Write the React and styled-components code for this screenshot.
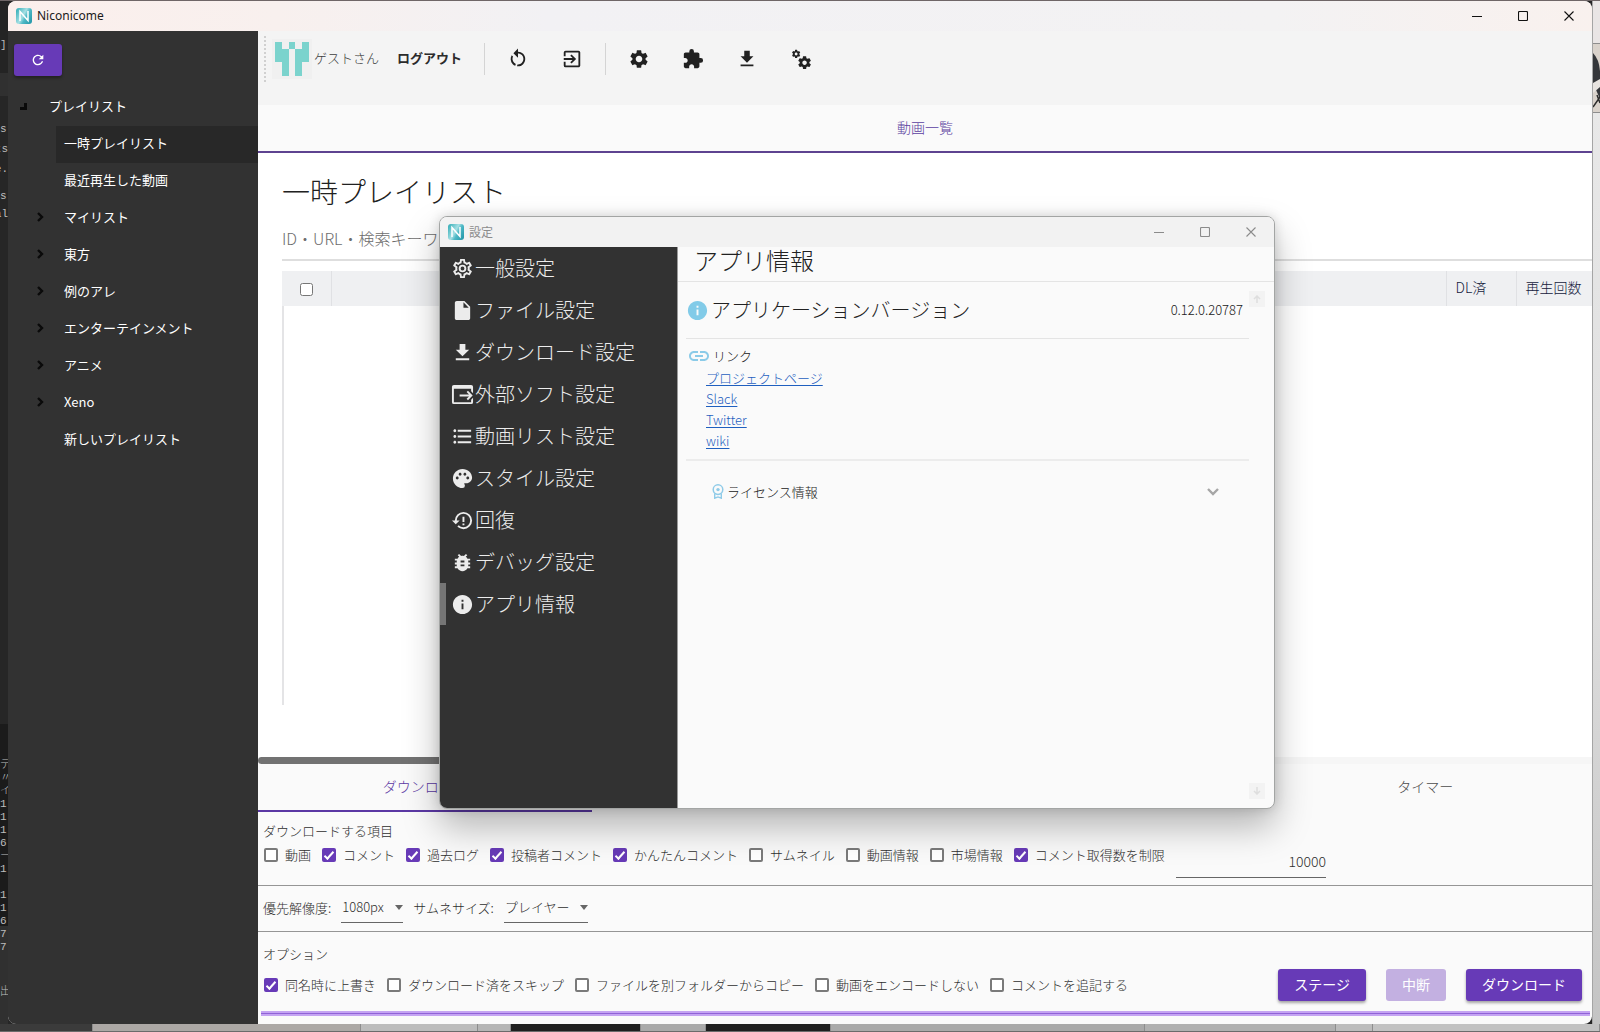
import React, { useState } from "react";
import styled, { createGlobalStyle } from "styled-components";
import {
  MdBugReport,
  MdExitToApp,
  MdExtension,
  MdFormatListBulleted,
  MdInfo,
  MdInsertDriveFile,
  MdLink,
  MdPalette,
  MdRefresh,
  MdSettings,
} from "react-icons/md";

const purple = "#673ab7";
const jp = `"Noto Sans CJK JP", "Noto Sans", sans-serif`;

const Global = createGlobalStyle`
  *, *::before, *::after { box-sizing: border-box; }
  body { margin: 0; background: #2a2a2a; font-family: ${jp}; font-weight: 300; font-size: 13px; line-height: 20px; color: #212121; }
  button, input, select { font: inherit; color: inherit; margin: 0; }
  button { border: 0; padding: 0; background: none; cursor: pointer; }
  svg { display: block; flex: none; }
  ul { list-style: none; margin: 0; padding: 0; }
  h1, h2, h3, p { margin: 0; font-weight: 300; }
`;

/* ---------- desktop ---------- */

const Desktop = styled.div`
  position: relative;
  min-height: 100vh;
  display: grid;
  grid-template-columns: 8px minmax(0, 1fr) 8px;
  grid-template-rows: minmax(0, 1fr) 8px;
  padding-top: 1px;
  background: linear-gradient(#6f6667, #6f6667) top / 100% 1px no-repeat, #262626;
`;

const EditorStrip = styled.div`
  display: flex;
  flex-direction: column;
  overflow: hidden;
  width: 8px;
  background: linear-gradient(#242424 0 72px, #303030 72px 95px, #262626 95px 723px, #1b1b1b 723px 925px, #303030 925px);
  color: #bdbdbd;
  font-family: "Liberation Mono", ${jp};
  font-size: 11px;
  white-space: nowrap;
`;

const EditorLines = styled.div`
  display: flex;
  flex-direction: column;
  align-items: ${(p) => (p.$end ? "flex-end" : "flex-start")};
  padding-top: ${(p) => p.$top}px;
  line-height: ${(p) => p.$line}px;
`;

const EditorLine = styled.span`
  height: ${(p) => p.$line}px;
`;

const PictureStrip = styled.div`
  display: flex;
  flex-direction: column;
  padding-top: 42px;
  background: linear-gradient(#e9e5e5 0 42px, #e8e8e8 112px, #dcdcdc 60%, #c4c4c4);
  border-left: 1px solid #a5a5a5;
`;

const TaskStrip = styled.div`
  grid-column: 1 / -1;
  display: grid;
  grid-template-columns: 93fr 268fr 117fr 33fr 130fr 65fr 125fr 314fr 191fr 37fr 227fr;
  border-bottom: 1px solid #6b6b6b;
`;

const TaskPiece = styled.span`
  background: ${(p) => p.$tone};
  border-right: 1px solid #8d8d8d;
`;

/* ---------- window frame ---------- */

const AppWindow = styled.div`
  display: flex;
  flex-direction: column;
  min-width: 0;
  overflow: hidden;
  border-radius: 8px;
  background: #fafafa;
`;

const TitleBar = styled.header`
  display: flex;
  align-items: center;
  height: 30px;
  flex: none;
  padding-left: 8px;
  gap: 5px;
  font-family: ${(p) => (p.$muted ? jp : `"Noto Sans", sans-serif`)};
  font-size: 12px;
  font-weight: 400;
  color: ${(p) => (p.$muted ? "#8b8b8b" : "#1a1a1a")};
  background: ${(p) =>
    p.$muted ? "#f2f2f2" : "linear-gradient(90deg, #fbefec 0%, #f8f0ee 17%, #f2f1f4 34%, #f3f2f3 80%, #f9f1ee 100%)"};
`;

const TitleText = styled.span`
  flex: 1;
`;

const LogoTile = styled.span`
  width: 16px;
  height: 16px;
  flex: none;
  border-radius: 3px;
  background: linear-gradient(120deg, #2aa9b3, #a6e0e4 45%, #4fb9c6 60%, #1d93a6);
`;

const WindowButtons = styled.div`
  display: flex;
`;

const WindowButton = styled.button`
  width: 46px;
  height: 30px;
  display: grid;
  place-items: center;
`;

const Body = styled.div`
  flex: 1;
  display: flex;
  min-height: 0;
`;

/* ---------- playlist sidebar ---------- */

const Sidebar = styled.nav`
  width: 250px;
  flex: none;
  padding: 13px 0 0 6px;
  background: #323232;
  color: #fff;
  font-weight: 400;
`;

const ReloadButton = styled.button`
  display: grid;
  place-items: center;
  width: 48px;
  height: 32px;
  border-radius: 3px;
  background: ${purple};
  color: #fff;
  box-shadow: 0 2px 3px rgba(0, 0, 0, 0.35);
`;

const Tree = styled.ul`
  padding-top: 13px;
`;

const TreeRow = styled.li`
  display: flex;
  align-items: center;
  height: 37px;
  margin-left: ${(p) => (p.$root ? 0 : 42)}px;
  padding: 0 0 3px ${(p) => (p.$root ? 6 : 8)}px;
  color: #fff;
  background: ${(p) => (p.$selected ? "#282828" : "transparent")};
`;

const RootArrow = styled.span`
  width: 29px;
`;

const ChildArrow = styled.span`
  width: 0;
  display: flex;
  justify-content: flex-end;
  svg { margin-right: 20px; }
`;

/* ---------- main area ---------- */

const Main = styled.main`
  flex: 1;
  min-width: 0;
  display: flex;
  flex-direction: column;
`;

const Toolbar = styled.div`
  display: flex;
  align-items: flex-start;
  height: 74px;
  flex: none;
  padding: 5px 0 0 6px;
  background: #f4f4f4;
`;

const Grip = styled.span`
  width: 2px;
  height: 46px;
  margin-right: 6px;
  background: repeating-linear-gradient(#d0d0d0 0 2px, transparent 2px 4px);
`;

const ToolbarItems = styled.div`
  display: flex;
  align-items: center;
  height: 46px;
`;

const Avatar = styled.span`
  display: grid;
  place-items: center;
  width: 40px;
  height: 40px;
  background: #f0f0f0;
`;

const UserName = styled.span`
  padding: 0 0 2px 2px;
  color: #3d3d3d;
`;

const LogoutButton = styled.button`
  padding: 0 0 2px 18px;
  font-weight: 700;
  color: #2b2b2b;
`;

const Separator = styled.span`
  width: 1px;
  height: 32px;
  margin: 0 6px 0 ${(p) => p.$before}px;
  background: #d4d4d4;
`;

const IconButton = styled.button`
  width: 54px;
  height: 46px;
  display: grid;
  place-items: center;
  color: #212121;
`;

const ViewTab = styled.button`
  display: block;
  width: 100%;
  height: 48px;
  flex: none;
  padding-bottom: 2px;
  background: #fafafa;
  border-bottom: 2px solid #5e4390;
  color: #5b3fa0;
  font-size: 14px;
`;

const VideoPane = styled.section`
  flex: 1;
  display: flex;
  flex-direction: column;
  padding: 18px 0 0 24px;
  background: #fff;
`;

const PlaylistTitle = styled.h1`
  font-size: 28px;
  line-height: 40px;
`;

const SearchBox = styled.input`
  height: 38px;
  margin: 12px 0 10px;
  padding: 0 0 6px;
  border: 0;
  border-bottom: 2px solid #dedede;
  background: none;
  font-size: 16px;
  outline: 0;
  &::placeholder { color: #6d6d6d; opacity: 1; }
`;

const VideoTable = styled.table`
  width: 100%;
  border-collapse: collapse;
  table-layout: fixed;
  font-size: 14px;
  color: #14213d;
`;

const HeadCell = styled.th`
  width: ${(p) => (p.$width ? `${p.$width}px` : "auto")};
  height: 35px;
  padding: ${(p) => (p.$center ? "0 0 2px" : "0 0 4px 9px")};
  background: #eff0f2;
  border-right: 1px solid #e0e1e4;
  font-weight: 300;
  text-align: ${(p) => (p.$center ? "center" : "left")};
  white-space: nowrap;
  &:last-child { border-right: 0; }
  input { display: inline-block; vertical-align: middle; }
`;

const RowsArea = styled.div`
  flex: 1;
  margin-bottom: 52px;
  border-left: 2px solid #e4e4e6;
`;

const Splitter = styled.div`
  height: 7px;
  flex: none;
  display: flex;
  background: #f6f6f6;
`;

const SplitterThumb = styled.span`
  width: 50%;
  border-radius: 4px;
  background: #727272;
`;

/* ---------- download panel ---------- */

const TabStrip = styled.div`
  display: grid;
  grid-template-columns: repeat(4, 1fr);
  height: 48px;
  flex: none;
`;

const PanelTab = styled.button`
  grid-column: ${(p) => p.$column};
  padding-bottom: 2px;
  border-bottom: 2px solid ${(p) => (p.$active ? "#5b38a4" : "transparent")};
  color: ${(p) => (p.$active ? "#5b38a4" : "#4c4c4c")};
  font-size: 14px;
`;

const Panel = styled.section`
  flex: none;
  padding: ${(p) => p.$pad};
  border-bottom: ${(p) => (p.$last ? "0" : "1px solid #959595")};
  color: #2e2e2e;
`;

const CheckRow = styled.div`
  display: flex;
  align-items: ${(p) => (p.$top ? "flex-start" : "center")};
  height: ${(p) => p.$height}px;
  padding-left: 1px;
  gap: 11px;
`;

const CheckLabel = styled.label`
  display: flex;
  align-items: center;
  height: 28px;
  gap: 7px;
  white-space: nowrap;
`;

const Box = styled.input`
  appearance: none;
  display: grid;
  place-items: center;
  width: 14px;
  height: 14px;
  flex: none;
  border: 2px solid #7a7a7a;
  border-radius: 2px;
  background: #fff;
  &:checked { border-color: ${purple}; background: ${purple}; }
  &:checked::after {
    content: "";
    width: 10px;
    height: 5px;
    border-left: 2px solid #fff;
    border-bottom: 2px solid #fff;
    transform: translateY(-1px) rotate(-48deg);
  }
`;

const CountInput = styled.input`
  width: 150px;
  height: 33px;
  align-self: flex-end;
  padding: 0;
  border: 0;
  border-bottom: 1px solid #666;
  background: none;
  text-align: right;
  font-size: 14px;
`;

const SelectRow = styled.div`
  display: flex;
  align-items: center;
  gap: 10px;
`;

const SelectLabel = styled.label`
  display: flex;
  align-items: center;
  gap: 10px;
`;

const SelectShell = styled.span`
  display: grid;
  align-items: center;
  border-bottom: 1px solid #666;
  &::after {
    content: "";
    grid-area: 1 / 1;
    justify-self: end;
    border: 4px solid transparent;
    border-top: 5px solid #666;
    border-bottom: 0;
    pointer-events: none;
  }
`;

const Select = styled.select`
  grid-area: 1 / 1;
  appearance: none;
  width: ${(p) => p.$width}px;
  height: 29px;
  padding: 0 0 2px 1px;
  border: 0;
  background: none;
  font-size: 13px;
`;

const OptionsBar = styled.div`
  display: flex;
  align-items: center;
  justify-content: space-between;
  padding-right: 10px;
`;

const Actions = styled.div`
  display: flex;
  gap: 20px;
`;

const ActionButton = styled.button`
  height: 32px;
  padding: 0 16px 2px;
  border-radius: 3px;
  background: ${purple};
  color: #fff;
  font-size: 14px;
  font-weight: 400;
  box-shadow: 0 2px 3px rgba(0, 0, 0, 0.35);
  &:disabled { background: #c3b0e1; box-shadow: none; cursor: default; }
`;

const ProgressLine = styled.div`
  height: 5px;
  flex: none;
  margin: 0 2px 8px 3px;
  background: linear-gradient(#c4a3f2 0 2px, #8f62d6 2px 3px, #c4a3f2 3px);
`;

/* ---------- settings window ---------- */

const Dialog = styled.div`
  position: absolute;
  left: 439px;
  top: 216px;
  width: 836px;
  height: 593px;
  display: flex;
  flex-direction: column;
  overflow: hidden;
  border: 1px solid #a3a5a4;
  border-radius: 8px;
  background: #fafafa;
  box-shadow: 0 18px 36px rgba(0, 0, 0, 0.28), 0 0 12px rgba(0, 0, 0, 0.14);
`;

const SettingsNav = styled.nav`
  width: 238px;
  flex: none;
  background: #323232;
  border-right: 1px solid #9a9a9a;
`;

const NavButton = styled.button`
  display: flex;
  align-items: center;
  gap: 1px;
  width: 100%;
  height: 42px;
  padding-left: 5px;
  border-left: 6px solid ${(p) => (p.$active ? "#757575" : "transparent")};
  color: #ececec;
  font-size: 20px;
`;

const SettingsPage = styled.section`
  flex: 1;
  min-width: 0;
  display: flex;
  flex-direction: column;
`;

const PageTitle = styled.h2`
  height: 35px;
  padding-left: 16px;
  border-bottom: 1px solid #e4e4e4;
  font-size: 24px;
  line-height: 26px;
`;

const PageBody = styled.div`
  flex: 1;
  display: flex;
  padding: 0 9px 0 8px;
`;

const PageContent = styled.div`
  flex: 1;
`;

const VersionRow = styled.div`
  display: flex;
  align-items: center;
  height: 57px;
  padding-right: 6px;
  gap: 2px;
  border-bottom: 1px solid #e4e4e4;
`;

const VersionTitle = styled.h3`
  flex: 1;
  font-size: 20px;
`;

const VersionText = styled.span`
  font-size: 13px;
`;

const LinkBlock = styled.div`
  height: 122px;
  padding: 6px 0 0 1px;
  border-bottom: 2px solid #ececec;
`;

const LinkHeading = styled.h3`
  display: flex;
  align-items: center;
  gap: 2px;
  height: 22px;
  font-size: 13px;
`;

const LinkList = styled.ul`
  padding-left: 19px;
  line-height: 21px;
`;

const ExternalLink = styled.a`
  color: #1f5fbf;
  text-underline-offset: 2px;
`;

const LicenseButton = styled.button`
  display: flex;
  align-items: center;
  width: 100%;
  height: 61px;
  padding: 0 29px 0 26px;
  gap: 3px;
`;

const LicenseText = styled.span`
  flex: 1;
  text-align: left;
`;

const ScrollColumn = styled.div`
  display: flex;
  flex-direction: column;
  justify-content: space-between;
  padding: 9px 0;
`;

const ScrollButton = styled.button`
  width: 16px;
  height: 16px;
  display: grid;
  place-items: center;
  background: #f3f3f3;
`;

/* ---------- icons ---------- */

const Glyph = ({ d, size = 22, color = "currentColor" }) => (
  <svg width={size} height={size} viewBox="0 0 24 24" fill={color} aria-hidden="true">
    <path d={d} />
  </svg>
);

const paths = {
  restart:
    "M12,4C14.1,4 16.1,4.8 17.6,6.3C20.7,9.4 20.7,14.5 17.6,17.6C15.8,19.5 13.3,20.2 10.9,19.9L11.4,17.9C13.1,18.1 14.9,17.5 16.2,16.2C18.5,13.9 18.5,10.1 16.2,7.7C15.1,6.6 13.5,6 12,6V10.6L7,5.6L12,0.6V4M6.3,17.6C3.7,15 3.3,11 5.1,7.9L6.6,9.4C5.5,11.6 5.9,14.4 7.8,16.2C8.3,16.7 8.9,17.1 9.6,17.4L9,19.4C8,19 7.1,18.4 6.3,17.6Z",
  download: "M5,20H19V18H5M19,9H15V3H9V9H5L12,16L19,9Z",
  cogs: "M15.9,18.45C17.25,18.45 18.35,17.35 18.35,16C18.35,14.65 17.25,13.55 15.9,13.55C14.54,13.55 13.45,14.65 13.45,16C13.45,17.35 14.54,18.45 15.9,18.45M21.1,16.68L22.58,17.84C22.71,17.95 22.75,18.13 22.66,18.29L21.26,20.71C21.17,20.86 21,20.92 20.83,20.86L19.09,20.16C18.73,20.44 18.33,20.67 17.91,20.85L17.64,22.7C17.62,22.87 17.47,23 17.3,23H14.5C14.32,23 14.18,22.87 14.15,22.7L13.89,20.85C13.46,20.67 13.07,20.44 12.71,20.16L10.96,20.86C10.81,20.92 10.62,20.86 10.54,20.71L9.14,18.29C9.05,18.13 9.09,17.95 9.22,17.84L10.7,16.68L10.65,16L10.7,15.31L9.22,14.16C9.09,14.05 9.05,13.86 9.14,13.71L10.54,11.29C10.62,11.13 10.81,11.07 10.96,11.13L12.71,11.84C13.07,11.56 13.46,11.32 13.89,11.15L14.15,9.29C14.18,9.13 14.32,9 14.5,9H17.3C17.47,9 17.62,9.13 17.64,9.29L17.91,11.15C18.33,11.32 18.73,11.56 19.09,11.84L20.83,11.13C21,11.07 21.17,11.13 21.26,11.29L22.66,13.71C22.75,13.86 22.71,14.05 22.58,14.16L21.1,15.31L21.15,16L21.1,16.68M6.69,8.07C7.56,8.07 8.26,7.37 8.26,6.5C8.26,5.63 7.56,4.92 6.69,4.92C5.82,4.92 5.12,5.63 5.12,6.5C5.12,7.37 5.82,8.07 6.69,8.07M10.03,6.94L11,7.68C11.07,7.75 11.09,7.87 11.03,7.97L10.13,9.53C10.08,9.63 9.96,9.67 9.86,9.63L8.74,9.18L8,9.62L7.81,10.81C7.79,10.92 7.7,11 7.59,11H5.79C5.67,11 5.58,10.92 5.56,10.81L5.4,9.62L4.64,9.18L3.5,9.63C3.41,9.67 3.3,9.63 3.24,9.53L2.34,7.97C2.28,7.87 2.31,7.75 2.39,7.68L3.34,6.94L3.31,6.5L3.34,6.06L2.39,5.32C2.31,5.25 2.28,5.13 2.34,5.03L3.24,3.47C3.3,3.37 3.41,3.33 3.5,3.38L4.63,3.82L5.4,3.38L5.56,2.19C5.58,2.08 5.67,2 5.79,2H7.59C7.7,2 7.79,2.08 7.81,2.19L8,3.38L8.74,3.82L9.86,3.38C9.96,3.33 10.08,3.37 10.13,3.47L11.03,5.03C11.09,5.13 11.07,5.25 11,5.32L10.03,6.06L10.06,6.5L10.03,6.94Z",
  cogOutline:
    "M12,8A4,4 0 0,1 16,12A4,4 0 0,1 12,16A4,4 0 0,1 8,12A4,4 0 0,1 12,8M12,10A2,2 0 0,0 10,12A2,2 0 0,0 12,14A2,2 0 0,0 14,12A2,2 0 0,0 12,10M10,22C9.75,22 9.54,21.82 9.5,21.58L9.13,18.93C8.5,18.68 7.96,18.34 7.44,17.94L4.95,18.95C4.73,19.03 4.46,18.95 4.34,18.73L2.34,15.27C2.21,15.05 2.27,14.78 2.46,14.63L4.57,12.97L4.5,12L4.57,11L2.46,9.37C2.27,9.22 2.21,8.95 2.34,8.73L4.34,5.27C4.46,5.05 4.73,4.96 4.95,5.05L7.44,6.05C7.96,5.66 8.5,5.32 9.13,5.07L9.5,2.42C9.54,2.18 9.75,2 10,2H14C14.25,2 14.46,2.18 14.5,2.42L14.87,5.07C15.5,5.32 16.04,5.66 16.56,6.05L19.05,5.05C19.27,4.96 19.54,5.05 19.66,5.27L21.66,8.73C21.79,8.95 21.73,9.22 21.54,9.37L19.43,11L19.5,12L19.43,13L21.54,14.63C21.73,14.78 21.79,15.05 21.66,15.27L19.66,18.73C19.54,18.95 19.27,19.04 19.05,18.95L16.56,17.95C16.04,18.34 15.5,18.68 14.87,18.93L14.5,21.58C14.46,21.82 14.25,22 14,22H10M11.25,4L10.88,6.61C9.68,6.86 8.62,7.5 7.85,8.39L5.44,7.35L4.69,8.65L6.8,10.2C6.4,11.37 6.4,12.64 6.8,13.8L4.68,15.36L5.43,16.66L7.86,15.62C8.63,16.5 9.68,17.14 10.87,17.38L11.24,20H12.76L13.13,17.39C14.32,17.14 15.37,16.5 16.14,15.62L18.57,16.66L19.32,15.36L17.2,13.81C17.6,12.64 17.6,11.37 17.2,10.2L19.31,8.65L18.56,7.35L16.15,8.39C15.38,7.5 14.32,6.86 13.12,6.62L12.75,4H11.25Z",
  appExport:
    "M9,12H18.8L16.3,9.5L17.7,8.1L22.6,13L17.7,17.9L16.3,16.5L18.8,14H9V12M21,17.4V20H3V6H21V8.6L23,10.6V4A2,2 0 0,0 21,2H3A2,2 0 0,0 1,4V20A2,2 0 0,0 3,22H21A2,2 0 0,0 23,20V15.4L21,17.4Z",
  restoreAlert:
    "M12,8H14V13.5H12V8M12,15H14V17H12V15M13,3A9,9 0 0,0 4,12H1L4.96,16.03L9,12H6A7,7 0 0,1 13,5A7,7 0 0,1 20,12A7,7 0 0,1 13,19C11.07,19 9.32,18.21 8.06,16.94L6.64,18.36C8.27,20 10.5,21 13,21A9,9 0 0,0 22,12A9,9 0 0,0 13,3Z",
};

const identicon = ["10101", "11011", "11011", "01010", "01010"];

const Identicon = () => (
  <svg width="34" height="34" viewBox="0 0 5 5" fill="#7bd3cd" shapeRendering="crispEdges" aria-hidden="true">
    {identicon.flatMap((row, y) =>
      [...row].map((c, x) => (c === "1" ? <rect key={`${x}${y}`} x={x} y={y} width="1" height="1" /> : null))
    )}
  </svg>
);

const AppLogo = () => (
  <LogoTile>
    <svg width="16" height="16" viewBox="0 0 16 16" fill="none" stroke="#fff" strokeWidth="1.5" aria-hidden="true">
      <polyline points="4,13 4,3.5 12,12.5 12,3" />
    </svg>
  </LogoTile>
);

const FrameButtons = ({ color }) => (
  <WindowButtons>
    {[
      ["最小化", <path key="p" d="M0 5.5H10" />],
      ["最大化", <rect key="p" x="0.5" y="0.5" width="9" height="9" rx="1" />],
      ["閉じる", <path key="p" d="M0.5 0.5L9.5 9.5M9.5 0.5L0.5 9.5" />],
    ].map(([name, shape]) => (
      <WindowButton key={name} aria-label={name}>
        <svg width="10" height="10" viewBox="0 0 10 10" fill="none" stroke={color} strokeWidth="1.1">
          {shape}
        </svg>
      </WindowButton>
    ))}
  </WindowButtons>
);

const LicenseIcon = () => (
  <svg width="12" height="15" viewBox="0 0 12 15" fill="none" stroke="#8fcbe8" aria-hidden="true">
    <circle cx="6" cy="5.6" r="4.8" strokeWidth="1.5" />
    <circle cx="6" cy="5.6" r="1.7" fill="#8fcbe8" stroke="none" />
    <path d="M2.7 9.5V14.2L6 12.9L9.3 14.2V9.5" strokeWidth="1.4" />
  </svg>
);

const StripArt = () => (
  <svg width="7" height="70" viewBox="0 0 7 70" aria-hidden="true">
    <rect width="7" height="70" fill="#d9d2cb" />
    <path d="M0 0H7V1H0z" fill="#8d8d8d" />
    <path d="M0 10Q6 16 7 28V56L0 40z" fill="#34363a" />
    <path d="M0 40L7 36V44L0 50z" fill="#e8e4e0" />
    <path d="M0 64L7 54M4 52L7 60" stroke="#2b2b2b" strokeWidth="1.5" />
    <path d="M0 69H7V70H0z" fill="#8d8d8d" />
  </svg>
);

/* ---------- data ---------- */

const playlists = [
  { name: "一時プレイリスト", selected: true },
  { name: "最近再生した動画" },
  { name: "マイリスト", children: true },
  { name: "東方", children: true },
  { name: "例のアレ", children: true },
  { name: "エンターテインメント", children: true },
  { name: "アニメ", children: true },
  { name: "Xeno", children: true },
  { name: "新しいプレイリスト" },
];

const downloadItems = [
  ["動画", false],
  ["コメント", true],
  ["過去ログ", true],
  ["投稿者コメント", true],
  ["かんたんコメント", true],
  ["サムネイル", false],
  ["動画情報", false],
  ["市場情報", false],
  ["コメント取得数を制限", true],
];

const optionItems = [
  ["同名時に上書き", true],
  ["ダウンロード済をスキップ", false],
  ["ファイルを別フォルダーからコピー", false],
  ["動画をエンコードしない", false],
  ["コメントを追記する", false],
];

const settingsPages = [
  ["一般設定", <Glyph key="i" d={paths.cogOutline} size={23} />],
  ["ファイル設定", <MdInsertDriveFile key="i" size={23} />],
  ["ダウンロード設定", <Glyph key="i" d={paths.download} size={23} />],
  ["外部ソフト設定", <Glyph key="i" d={paths.appExport} size={23} />],
  ["動画リスト設定", <MdFormatListBulleted key="i" size={23} />],
  ["スタイル設定", <MdPalette key="i" size={23} />],
  ["回復", <Glyph key="i" d={paths.restoreAlert} size={23} />],
  ["デバッグ設定", <MdBugReport key="i" size={23} />],
  ["アプリ情報", <MdInfo key="i" size={23} />],
];

const links = ["プロジェクトページ", "Slack", "Twitter", "wiki"];

const editorBlocks = [
  { top: 38, line: 13, lines: ["]"] },
  { top: 67, line: 20, lines: ["s"] },
  { top: 0, line: 20, end: true, lines: ["ts", "e."] },
  { top: 8, line: 18, lines: ["s"] },
  { top: 0, line: 18, end: true, lines: ["al"] },
  {
    top: 536,
    line: 13,
    lines: ["デ", "〃", "イ", "1:", "1:", "1:", "6!", "ー", "1:", "", "1:", "1:", "6!", "7!", "7!"],
  },
  { top: 32, line: 13, lines: ["出"] },
];

const taskTones = ["#3b3b3b", "#aca8a5", "#bcbcbc", "#b5b5b5", "#1f1f1f", "#a9a9a9", "#1f1f1f", "#a9a9a9", "#b0b0b0", "#bcbcbc", "#c2c2c2"];

const Checks = ({ items }) =>
  items.map(([name, on]) => (
    <CheckLabel key={name}>
      <Box type="checkbox" defaultChecked={on} />
      {name}
    </CheckLabel>
  ));

const SettingsWindow = () => {
  const [page, setPage] = useState("アプリ情報");
  return (
    <Dialog role="dialog" aria-label="設定">
      <TitleBar $muted>
        <AppLogo />
        <TitleText>設定</TitleText>
        <FrameButtons color="#8b8b8b" />
      </TitleBar>
      <Body>
        <SettingsNav>
          {settingsPages.map(([name, icon]) => (
            <NavButton key={name} $active={page === name} onClick={() => setPage(name)}>
              {icon}
              {name}
            </NavButton>
          ))}
        </SettingsNav>
        <SettingsPage>
          <PageTitle>アプリ情報</PageTitle>
          <PageBody>
            <PageContent>
              <VersionRow>
                <MdInfo size={23} color="#82cbe8" />
                <VersionTitle>アプリケーションバージョン</VersionTitle>
                <VersionText>0.12.0.20787</VersionText>
              </VersionRow>
              <LinkBlock>
                <LinkHeading>
                  <MdLink size={24} color="#8bcbe8" />
                  リンク
                </LinkHeading>
                <LinkList>
                  {links.map((name) => (
                    <li key={name}>
                      <ExternalLink href="#">{name}</ExternalLink>
                    </li>
                  ))}
                </LinkList>
              </LinkBlock>
              <LicenseButton>
                <LicenseIcon />
                <LicenseText>ライセンス情報</LicenseText>
                <svg width="14" height="10" viewBox="0 0 14 10" fill="none" stroke="#a6a6a6" strokeWidth="2.4">
                  <path d="M2 2L7 7L12 2" />
                </svg>
              </LicenseButton>
            </PageContent>
            <ScrollColumn>
              <ScrollButton aria-label="上へスクロール">
                <svg width="8" height="8" viewBox="0 0 8 8" fill="none" stroke="#dedede" strokeWidth="1.5">
                  <path d="M4 8V1M1 4L4 1L7 4" />
                </svg>
              </ScrollButton>
              <ScrollButton aria-label="下へスクロール">
                <svg width="8" height="8" viewBox="0 0 8 8" fill="none" stroke="#dedede" strokeWidth="1.5">
                  <path d="M4 0V7M1 4L4 7L7 4" />
                </svg>
              </ScrollButton>
            </ScrollColumn>
          </PageBody>
        </SettingsPage>
      </Body>
    </Dialog>
  );
};

const Editor = () => (
  <EditorStrip>
    {editorBlocks.map((block, b) => (
      <EditorLines key={b} $top={block.top} $line={block.line} $end={block.end}>
        {block.lines.map((text, i) => (
          <EditorLine key={i} $line={block.line}>
            {text}
          </EditorLine>
        ))}
      </EditorLines>
    ))}
  </EditorStrip>
);

export default function App() {
  return (
    <>
      <Global />
      <Desktop>
        <Editor />
        <AppWindow>
          <TitleBar>
            <AppLogo />
            <TitleText>Niconicome</TitleText>
            <FrameButtons color="#111" />
          </TitleBar>
          <Body>
            <Sidebar>
              <ReloadButton aria-label="更新">
                <MdRefresh size={16} />
              </ReloadButton>
              <Tree>
                <TreeRow $root>
                  <RootArrow>
                    <svg width="7" height="7" viewBox="0 0 7 7" fill="#0a0a0a">
                      <path d="M7 0V7H0V4H4V0z" />
                    </svg>
                  </RootArrow>
                  プレイリスト
                </TreeRow>
                {playlists.map((item) => (
                  <TreeRow key={item.name} $selected={item.selected}>
                    {item.children && (
                      <ChildArrow>
                        <svg width="7" height="10" viewBox="0 0 7 10" fill="none" stroke="#0a0a0a" strokeWidth="2.4">
                          <path d="M1 1L5 5L1 9" />
                        </svg>
                      </ChildArrow>
                    )}
                    {item.name}
                  </TreeRow>
                ))}
              </Tree>
            </Sidebar>
            <Main>
              <Toolbar>
                <Grip />
                <ToolbarItems>
                  <Avatar>
                    <Identicon />
                  </Avatar>
                  <UserName>ゲストさん</UserName>
                  <LogoutButton>ログアウト</LogoutButton>
                  <Separator $before={22} />
                  <IconButton aria-label="再起動">
                    <Glyph d={paths.restart} size={22} />
                  </IconButton>
                  <IconButton aria-label="終了">
                    <MdExitToApp size={22} />
                  </IconButton>
                  <Separator $before={6} />
                  <IconButton aria-label="設定">
                    <MdSettings size={22} />
                  </IconButton>
                  <IconButton aria-label="アドオン">
                    <MdExtension size={22} />
                  </IconButton>
                  <IconButton aria-label="ダウンロード一覧">
                    <Glyph d={paths.download} />
                  </IconButton>
                  <IconButton aria-label="ツール">
                    <Glyph d={paths.cogs} />
                  </IconButton>
                </ToolbarItems>
              </Toolbar>
              <ViewTab>動画一覧</ViewTab>
              <VideoPane>
                <PlaylistTitle>一時プレイリスト</PlaylistTitle>
                <SearchBox aria-label="検索" placeholder="ID・URL・検索キーワード" />
                <VideoTable>
                  <thead>
                    <tr>
                      <HeadCell $width={49} $center>
                        <input type="checkbox" aria-label="すべて選択" />
                      </HeadCell>
                      <HeadCell />
                      <HeadCell $width={70}>DL済</HeadCell>
                      <HeadCell $width={76}>再生回数</HeadCell>
                    </tr>
                  </thead>
                </VideoTable>
                <RowsArea />
              </VideoPane>
              <Splitter>
                <SplitterThumb />
              </Splitter>
              <TabStrip>
                <PanelTab $column={1} $active>
                  ダウンロード
                </PanelTab>
                <PanelTab $column={4}>タイマー</PanelTab>
              </TabStrip>
              <Panel $pad="9px 5px 7px">
                <p>ダウンロードする項目</p>
                <CheckRow $height={37} $top>
                  <Checks items={downloadItems} />
                  <CountInput aria-label="コメント取得数" defaultValue="10000" />
                </CheckRow>
              </Panel>
              <Panel $pad="7px 5px 8px">
                <SelectRow>
                  <SelectLabel>
                    優先解像度:
                    <SelectShell>
                      <Select $width={62} defaultValue="1080px">
                        <option>1080px</option>
                      </Select>
                    </SelectShell>
                  </SelectLabel>
                  <SelectLabel>
                    サムネサイズ:
                    <SelectShell>
                      <Select $width={84} defaultValue="プレイヤー">
                        <option>プレイヤー</option>
                      </Select>
                    </SelectShell>
                  </SelectLabel>
                </SelectRow>
              </Panel>
              <Panel $pad="12px 0 5px 5px" $last>
                <p>オプション</p>
                <OptionsBar>
                  <CheckRow $height={42}>
                    <Checks items={optionItems} />
                  </CheckRow>
                  <Actions>
                    <ActionButton>ステージ</ActionButton>
                    <ActionButton disabled>中断</ActionButton>
                    <ActionButton>ダウンロード</ActionButton>
                  </Actions>
                </OptionsBar>
              </Panel>
              <ProgressLine />
            </Main>
          </Body>
        </AppWindow>
        <PictureStrip>
          <StripArt />
        </PictureStrip>
        <TaskStrip>
          {taskTones.map((tone, i) => (
            <TaskPiece key={i} $tone={tone} />
          ))}
        </TaskStrip>
        <SettingsWindow />
      </Desktop>
    </>
  );
}
